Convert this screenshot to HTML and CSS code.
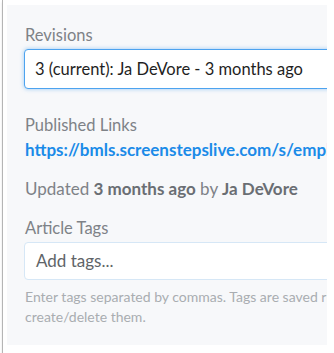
FILE: index.html
```html
<!DOCTYPE html>
<html>
<head>
<meta charset="utf-8">
<link rel="stylesheet" href="styles.css">
</head>
<body>
<div class="frame">
  <div class="panel">
    <div class="content">
      <div class="label first">Revisions</div>
      <div class="select">3 (current): Ja DeVore - 3 months ago</div>
      <div class="label published">Published Links</div>
      <a class="link" href="#">https://bmls.screenstepslive.com/s/employee-handbook/m/policies</a>
      <div class="updated">Updated <b>3 months ago</b> by <b>Ja DeVore</b></div>
      <div class="label tags-label">Article Tags</div>
      <div class="tags-input">Add tags...</div>
      <div class="help">Enter tags separated by commas. Tags are saved right away, so there is no need to<br>create/delete them.</div>
    </div>
  </div>
</div>
</body>
</html>
```
FILE: styles.css
```css
html, body {
  margin: 0;
  padding: 0;
  background: #ffffff;
}
body {
  font-family: Lato, "Open Sans", sans-serif;
}
.frame {
  margin-left: 2px;
  width: 328px;
  height: 344px;
  padding: 5px 4px 4px 4px;
  border: 1px solid #b5b5b5;
  border-top: none;
  box-shadow: 0 2px 2px rgba(0,0,0,0.12);
  background: #fff;
}
.panel {
  width: 320px;
  height: 340px;
  background: #f7f8fa;
  overflow: hidden;
}
.content {
  width: 700px;
  padding: 20px 0 0 17px;
}
.label {
  font-size: 16.5px;
  line-height: 20px;
  color: #7e8287;
  padding-left: 1px;
}
.select {
  margin-top: 4px;
  width: 420px;
  height: 38px;
  border: 1px solid #4da3ef;
  border-radius: 4px;
  background: #fff;
  box-shadow: 0 0 4px rgba(77,163,239,0.55);
  box-sizing: content-box;
  font-size: 16.5px;
  line-height: 38px;
  padding-left: 10px;
  color: #1f1f1f;
}
.published {
  margin-top: 26px;
}
.link {
  display: block;
  margin-top: 5px;
  font-size: 17px;
  font-weight: bold;
  line-height: 20px;
  color: #1b8be8;
  text-decoration: none;
  white-space: nowrap;
  padding-left: 1px;
}
.updated {
  margin-top: 19px;
  font-size: 17px;
  line-height: 20px;
  color: #7e8287;
  padding-left: 1px;
}
.updated b {
  color: #6a6e73;
}
.tags-label {
  margin-top: 19px;
}
.tags-input {
  margin-top: 4px;
  width: 420px;
  height: 36px;
  border: 1px solid #d6e7f6;
  border-radius: 4px;
  background: #fff;
  font-size: 17px;
  line-height: 36px;
  padding-left: 11px;
  color: #606468;
}
.help {
  margin-top: 7px;
  font-size: 14px;
  line-height: 20px;
  color: #a9adb1;
  padding-left: 1px;
  white-space: nowrap;
}
```
